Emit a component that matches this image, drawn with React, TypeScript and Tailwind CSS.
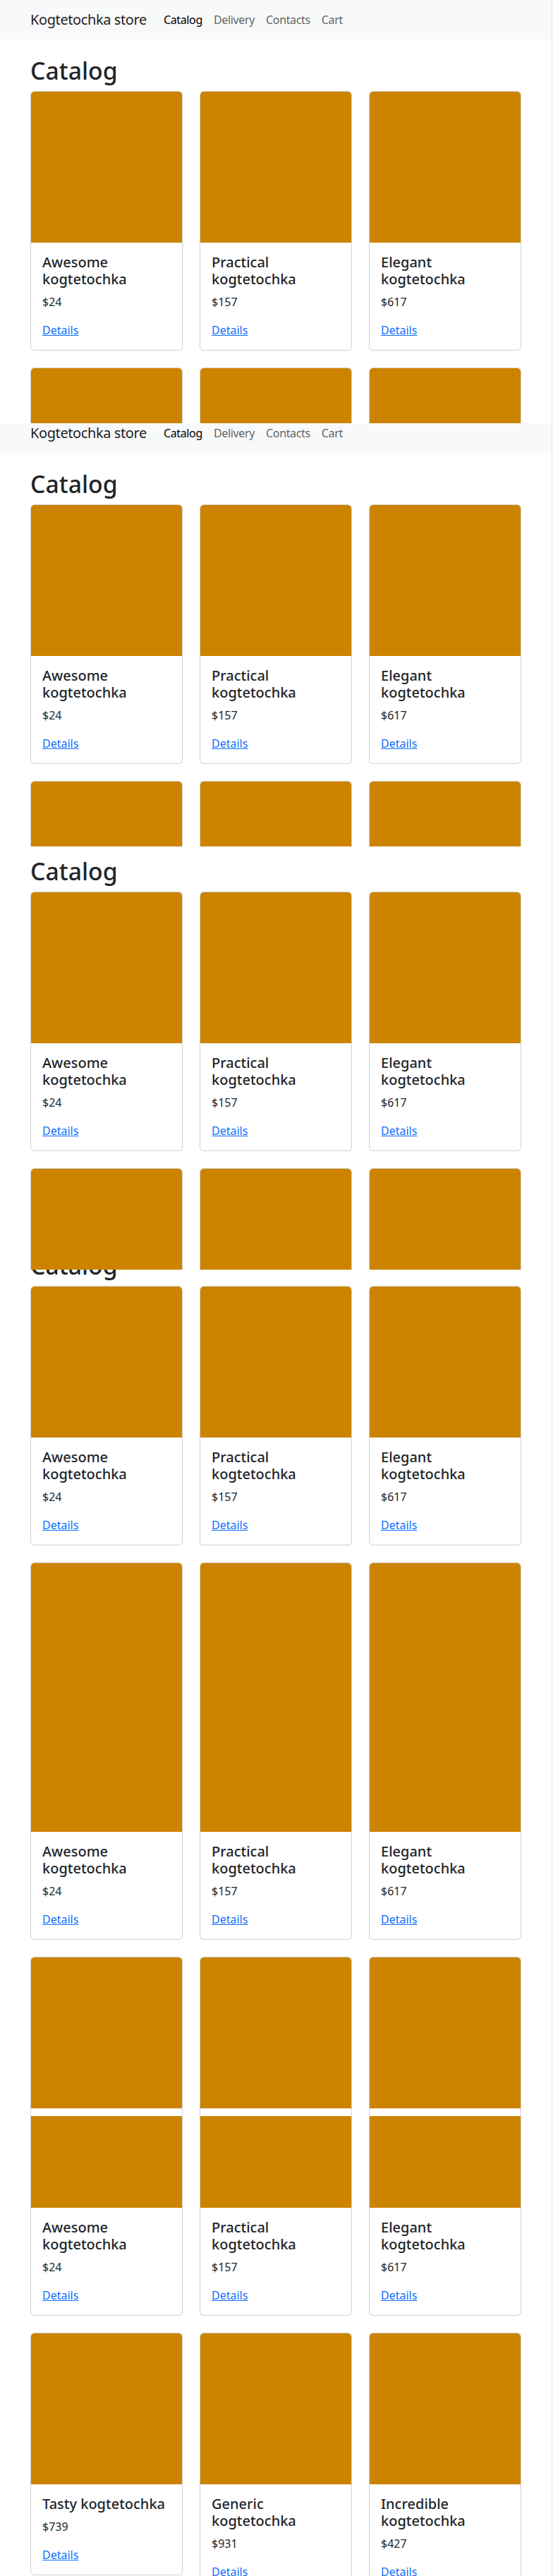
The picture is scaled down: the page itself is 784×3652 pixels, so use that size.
const products = [
  [
    { name: "Awesome kogtetochka", price: 24 },
    { name: "Practical kogtetochka", price: 157 },
    { name: "Elegant kogtetochka", price: 617 },
  ],
  [
    { name: "Awesome kogtetochka", price: 24 },
    { name: "Practical kogtetochka", price: 157 },
    { name: "Elegant kogtetochka", price: 617 },
  ],
  [
    { name: "Awesome kogtetochka", price: 24 },
    { name: "Practical kogtetochka", price: 157 },
    { name: "Elegant kogtetochka", price: 617 },
  ],
  [
    { name: "Tasty kogtetochka", price: 739 },
    { name: "Generic kogtetochka", price: 931 },
    { name: "Incredible kogtetochka", price: 427 },
  ],
]

function Navbar() {
  return (
    <nav className="h-[56px] bg-[#f8f9fa] py-2">
      <div className="mx-auto flex w-[720px] items-center px-3">
        <a href="#" className="mr-4 py-[5px] text-[20px] leading-[30px] tracking-[-0.4px] text-black/90">
          Kogtetochka store
        </a>
        <ul className="flex tracking-[-0.35px]">
          <li><a href="#" className="block p-2 text-black">Catalog</a></li>
          <li><a href="#" className="block p-2 text-black/65">Delivery</a></li>
          <li><a href="#" className="block p-2 text-black/65">Contacts</a></li>
          <li><a href="#" className="block p-2 text-black/65">Cart</a></li>
        </ul>
      </div>
    </nav>
  )
}

function ProductCard({ name, price }: { name: string; price: number }) {
  return (
    <div className="overflow-hidden rounded-[6px] border border-black/[0.175] bg-white">
      <div className="h-[214px] bg-[#cc8400]" />
      <div className="p-4">
        <h5 className="mb-2 text-[20px] leading-[24px] font-medium">{name}</h5>
        <p className="mb-4">${price}</p>
        <a href="#" className="text-[#0d6efd] underline">Details</a>
      </div>
    </div>
  )
}

function CatalogPage() {
  return (
    <div>
      <Navbar />
      <main className="mx-auto mt-6 w-[720px] px-3">
        <h1 className="mb-[9px] text-[33.76px] leading-[40px] font-medium">Catalog</h1>
        <div className="grid grid-cols-3 items-start gap-x-6 gap-y-6">
          {products.flat().map((p, i) => (
            <ProductCard key={i} name={p.name} price={p.price} />
          ))}
        </div>
      </main>
    </div>
  )
}

export default function App() {
  return (
    <div className="w-[784px] bg-white font-['Noto_Sans',sans-serif] text-[16px] leading-[24px] text-[#212529]">
      <div className="w-[783px] border-r border-[#e6e6e6]">
        <div className="h-[600px] overflow-hidden">
          <CatalogPage />
        </div>
        <div className="h-[600px] overflow-hidden">
          <div className="-mt-[14px]"><CatalogPage /></div>
        </div>
        <div className="h-[600px] overflow-hidden">
          <div className="-mt-[65px]"><CatalogPage /></div>
        </div>
        <div className="h-[600px] overflow-hidden">
          <div className="-mt-[106px]"><CatalogPage /></div>
        </div>
        <div className="h-[600px] overflow-hidden">
          <div className="-mt-[539px]"><CatalogPage /></div>
        </div>
        <div className="h-[652px] overflow-hidden">
          <div className="-mt-[998px]"><CatalogPage /></div>
        </div>
      </div>
    </div>
  )
}
